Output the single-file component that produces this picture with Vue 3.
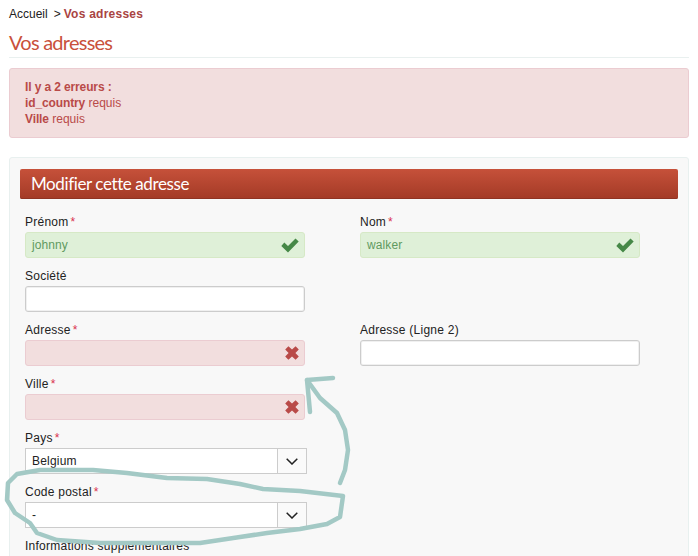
<script setup>
const rows = [
  [{ label: 'Prénom', req: true, value: 'johnny', state: 'ok' }, { label: 'Nom', req: true, value: 'walker', state: 'ok' }],
  [{ label: 'Société' }],
  [{ label: 'Adresse', req: true, state: 'err' }, { label: 'Adresse (Ligne 2)' }],
  [{ label: 'Ville', req: true, state: 'err' }],
]
</script>

<template>
  <div class="page">
    <nav class="crumb"><span class="home">Accueil</span><span class="sep">&gt;</span><strong>Vos adresses</strong></nav>
    <h1 class="title">Vos adresses</h1>
    <div class="alert">
      <p><b>Il y a 2 erreurs :</b></p>
      <p><b>id_country</b> requis</p>
      <p><b>Ville</b> requis</p>
    </div>
    <section class="panel">
      <h2 class="bar">Modifier cette adresse</h2>
      <div class="form">
        <div v-for="(row, i) in rows" :key="i" class="row">
          <div v-for="f in row" :key="f.label" class="field">
            <div class="label">{{ f.label }}<span v-if="f.req" class="star">*</span></div>
            <div class="input" :class="f.state">
              <span>{{ f.value }}</span>
              <svg v-if="f.state === 'ok'" class="icon" width="18" height="15" viewBox="0 0 18 15"><path d="M0.3 8 L3.3 4.6 L7 8 L14.5 0.4 L17.7 3.6 L7 14.4 Z" fill="#468847"/></svg>
              <svg v-if="f.state === 'err'" class="icon" width="14" height="14" viewBox="0 0 14 14"><path d="M0.2 3.4 L3.4 0.2 L7 3.6 L10.6 0.2 L13.8 3.4 L10.4 7 L13.8 10.6 L10.6 13.8 L7 10.4 L3.4 13.8 L0.2 10.6 L3.6 7 Z" fill="#b94a48"/></svg>
            </div>
          </div>
        </div>
        <div class="row">
          <div class="field">
            <div class="label">Pays<span class="star">*</span></div>
            <div class="select"><span class="val">Belgium</span><span class="btn"><svg width="12" height="7" viewBox="0 0 12 7"><path d="M0.7 0.7 L6 6 L11.3 0.7" fill="none" stroke="#222" stroke-width="1.5"/></svg></span></div>
          </div>
        </div>
        <div class="row">
          <div class="field">
            <div class="label">Code postal<span class="star">*</span></div>
            <div class="select"><span class="val">-</span><span class="btn"><svg width="12" height="7" viewBox="0 0 12 7"><path d="M0.7 0.7 L6 6 L11.3 0.7" fill="none" stroke="#222" stroke-width="1.5"/></svg></span></div>
          </div>
        </div>
        <div class="label">Informations supplémentaires</div>
      </div>
    </section>
    <svg class="ink" width="698" height="556" viewBox="0 0 698 556">
      <path d="M343 496 L300 491 L263 489 L240 484 L207 479 L167 478 L127 473 L93 470 L40 470 L17 474 L8 483 L7 500 L15 513 L30 523 L37 533 L57 540 L100 543 L160 543 L200 543 L240 537 L267 533 L300 529 L327 524 L340 517 L342 503 L343 496" />
      <path d="M340 483 L345 470 L348 450 L345 430 L337 413 L320 398 L307 380 L333 378" />
      <path d="M307 380 L310 412" />
    </svg>
  </div>
</template>

<style scoped>
.page { position: relative; width: 698px; height: 556px; overflow: hidden; padding: 0 9px; box-sizing: border-box; background: #fff; font-family: "Liberation Sans", Arial, sans-serif; font-size: 12px; color: #222; }
.crumb { height: 28px; line-height: 28px; display: flex; }
.crumb .sep { margin: 0 3px 0 6px; }
.crumb strong { color: #a94442; font-weight: bold; letter-spacing: .25px; }
.title { margin: 0; height: 29px; line-height: 28px; font-family: Lato, sans-serif; font-weight: 400; font-size: 20px; letter-spacing: -.75px; color: #c9513c; border-bottom: 1px solid #e9f0ef; box-sizing: content-box; }
.alert { margin-top: 10px; height: 70px; box-sizing: border-box; padding: 10px 15px; background: #f2dede; border: 1px solid #ebccd1; border-radius: 3px; color: #b94a48; line-height: 16px; }
.alert p { margin: 0; }
.alert b { letter-spacing: -.12px; }
.panel { margin-top: 19px; height: 420px; box-sizing: border-box; padding: 11px 10px 0; background: #f8f8f8; border: 1px solid #e8f0ef; border-radius: 3px; }
.bar { margin: 0; height: 30px; line-height: 29px; padding-left: 11px; font-family: Lato, sans-serif; font-weight: 400; font-size: 17px; letter-spacing: -.4px; color: #fff; background: linear-gradient(#c6513a, #a33a26); border-radius: 2px; box-shadow: inset 0 -1px 0 #8f3322; }
.form { padding: 15px 0 0 5px; }
.row { display: grid; grid-template-columns: 280px 280px; column-gap: 55px; height: 54px; }
.label { height: 18px; line-height: 17px; color: #222; letter-spacing: .25px; }
.star { color: #d9304f; margin-left: 2px; }
.field .input { height: 26px; box-sizing: border-box; background: #fff; border: 1px solid #ccc; box-shadow: inset 0 0 0 1px #f0f0f0; border-radius: 3px; padding-left: 6px; line-height: 22px; display: flex; justify-content: space-between; align-items: center; letter-spacing: .1px; }
.input.ok { background: #dff0d8; border-color: #d6e9c6; box-shadow: none; color: #5f9a60; }
.input.err { background: #f2dede; border-color: #ebccd1; box-shadow: none; }
.icon { margin-right: 5px; }
.select { width: 282px; height: 26px; box-sizing: border-box; background: #fff; border: 1px solid #ccc; display: flex; align-items: center; justify-content: space-between; }
.val { padding-left: 6px; letter-spacing: .2px; }
.btn { width: 29px; height: 24px; box-sizing: border-box; border-left: 1px solid #ccc; background: #fafafa; display: flex; align-items: center; justify-content: center; }
.ink { position: absolute; left: 0; top: 0; pointer-events: none; }
.ink path { fill: none; stroke: #a3c9c5; stroke-width: 4.5; stroke-linecap: round; stroke-linejoin: round; }
</style>

<style>
html, body { margin: 0; overflow: hidden; }
</style>
